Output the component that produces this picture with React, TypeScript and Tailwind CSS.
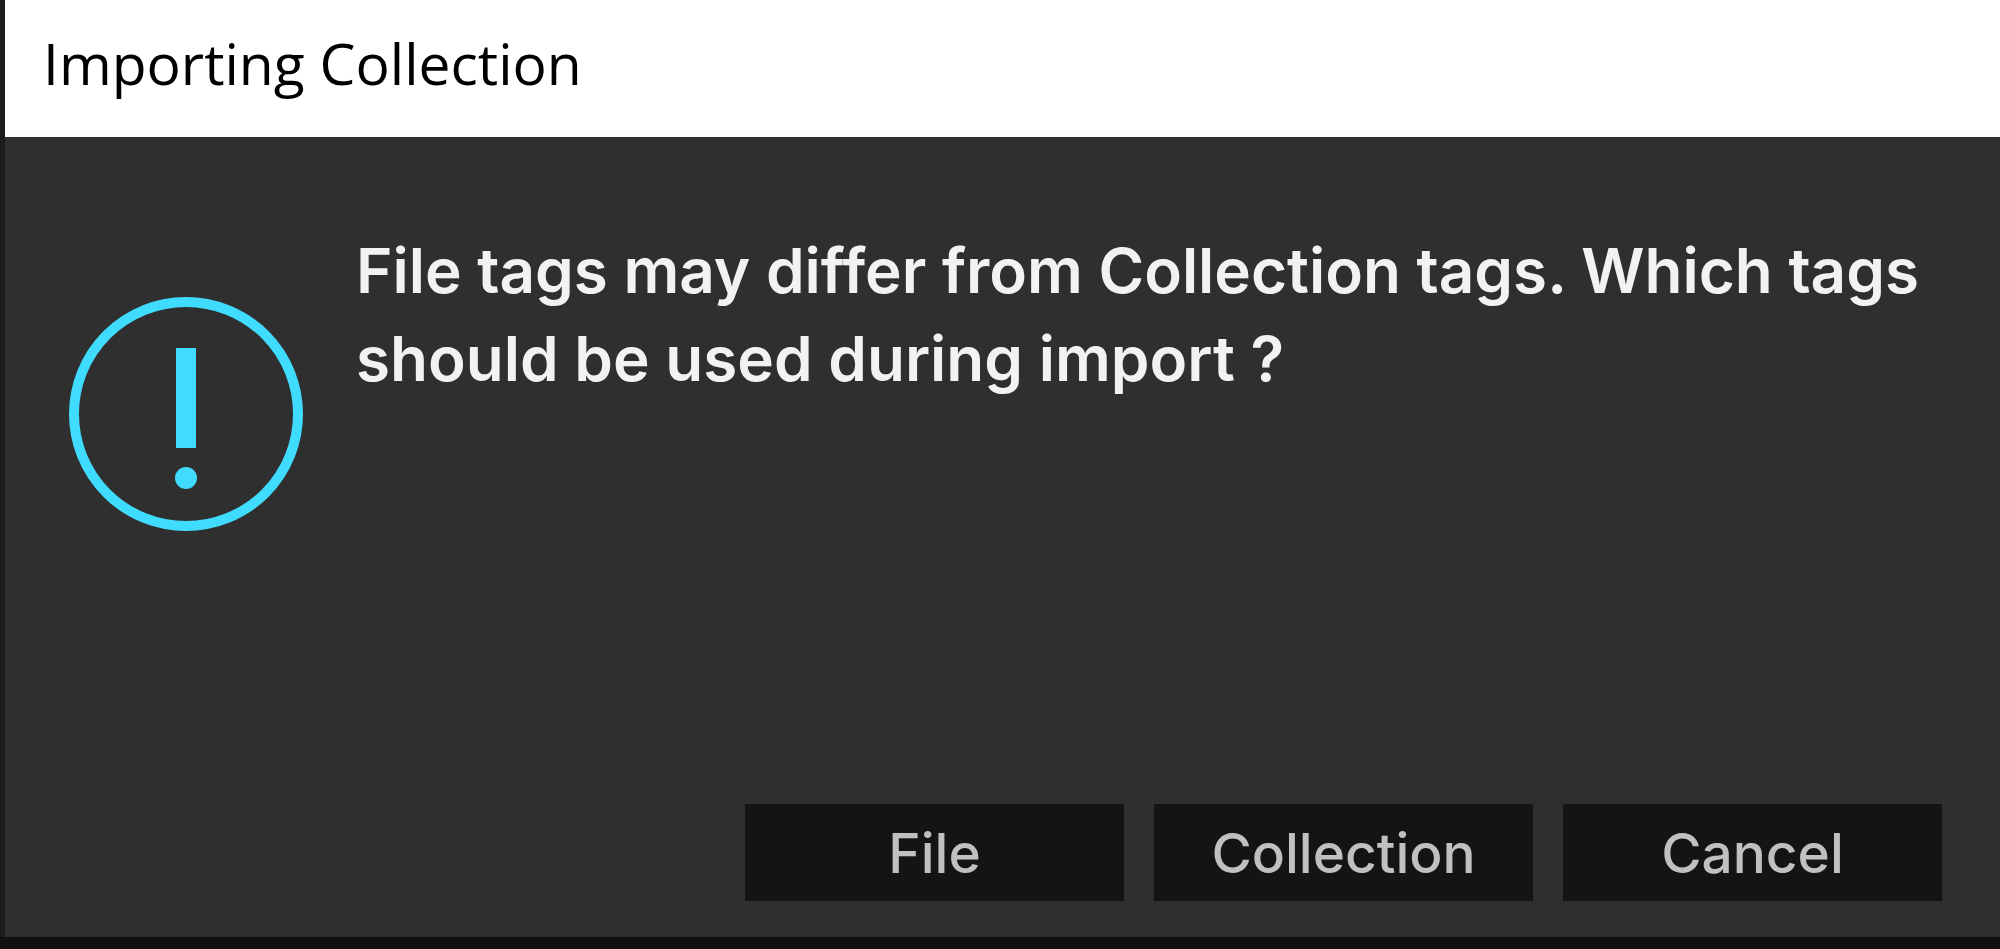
const actions = ["File", "Collection", "Cancel"];

function AlertIcon() {
  return (
    <svg className="w-[236px] h-[236px] shrink-0" viewBox="0 0 236 236" fill="none" aria-hidden="true">
      <circle cx="118" cy="118" r="112" stroke="#40dcff" strokeWidth="10" />
      <rect x="108" y="52" width="20" height="100" fill="#40dcff" />
      <circle cx="118" cy="182" r="11" fill="#40dcff" />
    </svg>
  );
}

export default function App() {
  return (
    <div className="min-h-screen flex flex-col border-b-12 border-[#101010]">
      <div
        className="flex-1 flex flex-col bg-[#2f2f2f] border-l-5 border-[#1c1c1c]"
        role="alertdialog"
        aria-labelledby="title"
        aria-describedby="message"
      >
        <header className="h-[137px] flex items-center bg-white pl-[38px] pb-3">
          <h1 id="title" className="font-['Open_Sans',sans-serif] text-[57px] leading-[80px] text-black">
            Importing Collection
          </h1>
        </header>

        <main className="flex-1 flex flex-col pt-[90px] pb-9">
          <div className="flex gap-[52px] pl-[63px]">
            <div className="pt-[69px]">
              <AlertIcon />
            </div>
            <p id="message" className="flex-1 font-['Inter',sans-serif] font-semibold text-[62px] leading-[88px] text-[#f2f2f2]">
              File tags may differ from Collection tags. Which tags should be used during import ?
            </p>
          </div>

          <div className="mt-auto flex justify-end gap-[30px] pr-[58px]">
            {actions.map((label) => (
              <button
                key={label}
                type="button"
                className="w-[379px] h-[97px] bg-[#141414] hover:bg-[#1c1c1c] font-['Inter',sans-serif] font-medium text-[55px] leading-[64px] text-[#c0c0c0]"
              >
                {label}
              </button>
            ))}
          </div>
        </main>
      </div>
    </div>
  );
}
